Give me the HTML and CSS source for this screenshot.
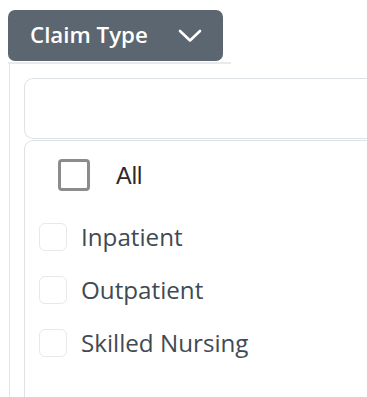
FILE: index.html
```html
<!DOCTYPE html>
<html>
<head>
<meta charset="utf-8">
<link rel="stylesheet" href="styles.css">
</head>
<body>
<div class="filter">
  <button class="toggle">
    <span class="toggle-label">Claim Type</span>
    <svg class="chev" width="24" height="14" viewBox="0 0 24 14"><path d="M2 2 L12 11.5 L22 2" fill="none" stroke="#fff" stroke-width="2.6" stroke-linecap="round" stroke-linejoin="round"/></svg>
  </button>
  <div class="panel">
    <div class="topline"></div>
    <div class="panel-body">
      <div class="search"></div>
      <div class="list">
        <label class="all-row"><span class="box-all"></span><span class="all-text">All</span></label>
        <div class="items">
          <label class="item"><span class="box"></span><span class="item-text">Inpatient</span></label>
          <label class="item"><span class="box"></span><span class="item-text">Outpatient</span></label>
          <label class="item"><span class="box"></span><span class="item-text">Skilled Nursing</span></label>
        </div>
      </div>
    </div>
  </div>
</div>
</body>
</html>
```
FILE: styles.css
```css
html, body {
  margin: 0;
  padding: 0;
  background: #ffffff;
  overflow: hidden;
  width: 367px;
  height: 397px;
}
.filter {
  box-sizing: border-box;
  width: 367px;
  height: 397px;
  padding: 10px 0 0 8px;
  display: flex;
  flex-direction: column;
}
.toggle {
  display: flex;
  align-items: center;
  justify-content: space-between;
  box-sizing: border-box;
  width: 215px;
  height: 51px;
  flex: none;
  margin: 0;
  padding: 0 21px 0 22px;
  border: none;
  border-radius: 7px;
  background: #5b6670;
  color: #ffffff;
  font-family: "Open Sans", sans-serif;
  font-weight: 600;
  font-size: 22.3px;
}
.toggle-label {
  padding-bottom: 2px;
}
.chev {
  display: block;
  margin-top: 1px;
}
.panel {
  flex: 1;
  min-height: 0;
  margin-top: 1px;
  overflow: hidden;
  display: flex;
  flex-direction: column;
}
.topline {
  flex: none;
  width: 223px;
  height: 2px;
  background: #e8eaec;
}
.panel-body {
  flex: 1;
  min-height: 0;
  margin-left: 1px;
  border-left: 1px solid #e1e5ea;
  padding: 14px 0 0 14px;
  display: flex;
  flex-direction: column;
  gap: 1px;
}
.search {
  box-sizing: border-box;
  flex: none;
  width: 360px;
  height: 61px;
  border: 1px solid #dde2e7;
  border-right: none;
  border-radius: 9px 0 0 9px;
}
.list {
  box-sizing: border-box;
  flex: 1;
  width: 360px;
  border: 1px solid #dde2e7;
  border-right: none;
  border-bottom: none;
  border-radius: 9px 0 0 0;
  padding: 18px 0 0 14px;
}
.all-row {
  display: flex;
  align-items: center;
  padding-left: 19px;
}
.box-all {
  box-sizing: border-box;
  width: 32px;
  height: 32px;
  border: 3px solid #8c8c8c;
  border-radius: 4px;
}
.all-text {
  margin-left: 26px;
  padding-top: 3px;
  font-family: "Liberation Sans", Arial, sans-serif;
  font-size: 23.5px;
  color: #2a2a2a;
}
.items {
  display: flex;
  flex-direction: column;
  gap: 25px;
  margin-top: 32px;
}
.item {
  display: flex;
  align-items: center;
}
.box {
  box-sizing: border-box;
  width: 28px;
  height: 28px;
  border: 1px solid #e6e8ea;
  border-radius: 6px;
}
.item-text {
  margin-left: 14px;
  font-family: "Open Sans", sans-serif;
  font-size: 24.2px;
  color: #3f4a54;
  line-height: 28px;
}
```
